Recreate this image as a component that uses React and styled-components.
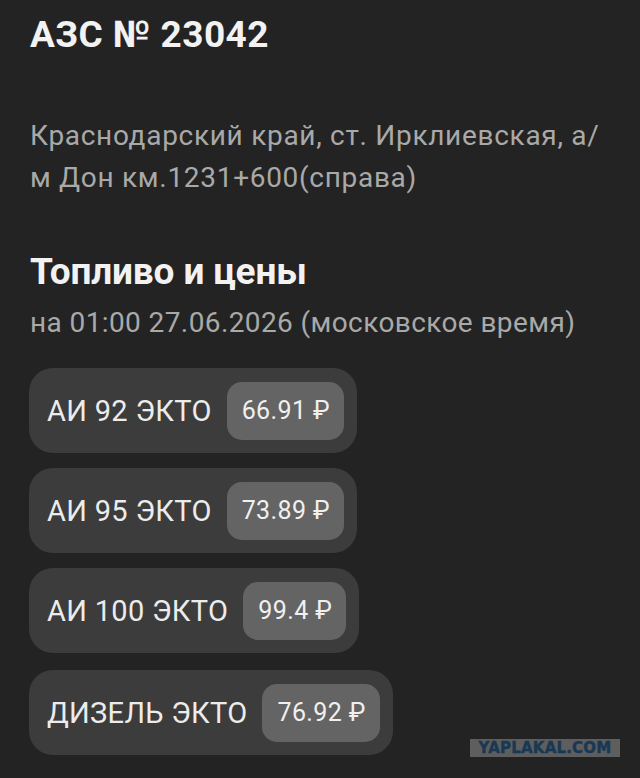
import React from "react"
import styled, { createGlobalStyle } from "styled-components"

const GlobalStyle = createGlobalStyle`
  html, body {
    margin: 0;
    padding: 0;
    background: #232323;
  }
  body {
    font-family: Roboto, "Noto Sans", sans-serif;
    -webkit-font-smoothing: antialiased;
  }
`

const Page = styled.div`
  position: relative;
  width: 640px;
  height: 778px;
  overflow: hidden;
  padding: 13px 30px 0;
  box-sizing: border-box;
  background: #232323;
`

const Title = styled.h1`
  margin: 0;
  font-size: 37px;
  line-height: 44px;
  font-weight: 700;
  letter-spacing: 0.45px;
  color: #f2f2f2;
`

const Address = styled.p`
  margin: 58px 0 0;
  font-size: 28px;
  line-height: 42px;
  font-weight: 400;
  letter-spacing: 0.7px;
  color: #a9a9a9;
`

const SectionTitle = styled.h2`
  margin: 51px 0 0;
  font-size: 37px;
  line-height: 44px;
  font-weight: 700;
  letter-spacing: -0.15px;
  color: #f2f2f2;
`

const Updated = styled.p`
  margin: 9px 0 0;
  font-size: 28px;
  line-height: 40px;
  letter-spacing: 0.4px;
  color: #a9a9a9;
`

const FuelList = styled.div`
  display: flex;
  flex-direction: column;
  align-items: flex-start;
  gap: 15px;
  margin-top: 25px;
  margin-left: -1px;
`

const Pill = styled.div`
  display: flex;
  align-items: center;
  gap: 15px;
  height: 85px;
  margin-top: ${p => (p.$last ? "2px" : "0")};
  padding: 0 13px 0 18px;
  box-sizing: border-box;
  border-radius: 24px;
  background: #3c3c3c;
`

const FuelName = styled.span`
  font-size: 29px;
  letter-spacing: 0.3px;
  color: #ececec;
`

const Price = styled.span`
  display: flex;
  align-items: center;
  height: 58px;
  padding: 0 14px 0 15px;
  border-radius: 15px;
  background: #646464;
  font-size: 25px;
  letter-spacing: 0.4px;
  color: #f0f0f0;
`

const Watermark = styled.div`
  position: absolute;
  left: 470px;
  top: 739px;
  width: 150px;
  height: 18px;
  display: flex;
  align-items: center;
  justify-content: center;
  background: #5e5e5e;
  font-family: "DejaVu Sans", sans-serif;
  font-weight: 700;
  font-size: 15px;
  letter-spacing: 0.2px;
  color: #183854;
  -webkit-text-stroke: 0.4px #183854;
`

const fuels = [
  { name: "АИ 92 ЭКТО", price: "66.91 ₽" },
  { name: "АИ 95 ЭКТО", price: "73.89 ₽" },
  { name: "АИ 100 ЭКТО", price: "99.4 ₽" },
  { name: "ДИЗЕЛЬ ЭКТО", price: "76.92 ₽" },
]

export default function App() {
  return (
    <>
      <GlobalStyle />
      <Page>
        <Title>АЗС № 23042</Title>
        <Address>
          Краснодарский край, ст. Ирклиевская, а/
          <br />м Дон км.1231+600(справа)
        </Address>
        <SectionTitle>Топливо и цены</SectionTitle>
        <Updated>на 01:00 27.06.2026 (московское время)</Updated>
        <FuelList>
          {fuels.map((f, i) => (
            <Pill key={f.name} $last={i === fuels.length - 1}>
              <FuelName>{f.name}</FuelName>
              <Price>{f.price}</Price>
            </Pill>
          ))}
        </FuelList>
        <Watermark>YAPLAKAL.COM</Watermark>
      </Page>
    </>
  )
}
